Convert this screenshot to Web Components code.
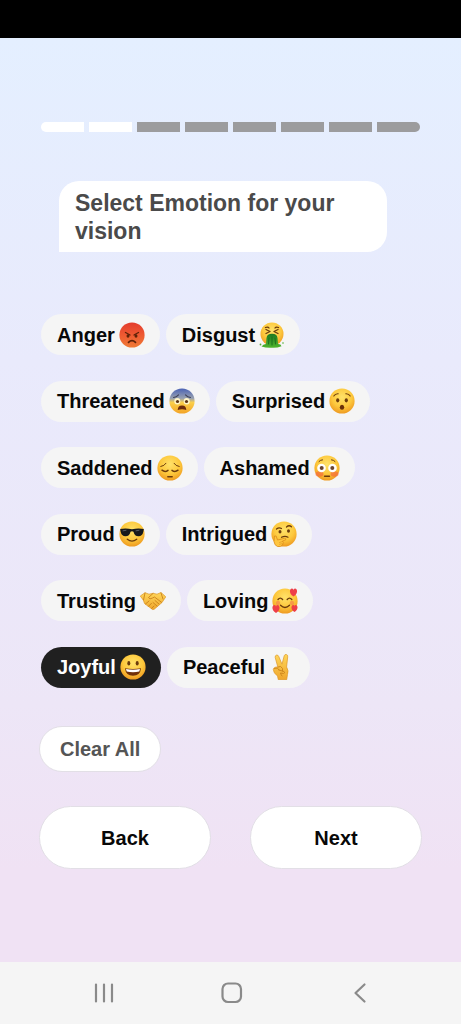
<!DOCTYPE html>
<html lang="en">
<head>
<meta charset="utf-8">
<meta name="viewport" content="width=device-width, initial-scale=1">
<title>Select Emotion</title>
<style>
  body { margin: 0; font-family: "Liberation Sans", Arial, Helvetica, sans-serif; }
</style>
</head>
<body>
<vision-app>
  <step-progress slot="progress" value="2" max="8"></step-progress>
  <speech-bubble slot="question">Select Emotion for your vision</speech-bubble>
  <emotion-chip icon="anger">Anger</emotion-chip>
  <emotion-chip icon="disgust">Disgust</emotion-chip>
  <emotion-chip icon="threatened">Threatened</emotion-chip>
  <emotion-chip icon="surprised">Surprised</emotion-chip>
  <emotion-chip icon="saddened">Saddened</emotion-chip>
  <emotion-chip icon="ashamed">Ashamed</emotion-chip>
  <emotion-chip icon="proud">Proud</emotion-chip>
  <emotion-chip icon="intrigued">Intrigued</emotion-chip>
  <emotion-chip icon="trusting">Trusting</emotion-chip>
  <emotion-chip icon="loving">Loving</emotion-chip>
  <emotion-chip icon="joyful" selected>Joyful</emotion-chip>
  <emotion-chip icon="peaceful">Peaceful</emotion-chip>
  <pill-button slot="clear" size="small">Clear All</pill-button>
  <pill-button slot="actions">Back</pill-button>
  <pill-button slot="actions">Next</pill-button>
</vision-app>

<script>
const defs = `<defs>
  <radialGradient id="y" cx=".5" cy=".35" r=".65"><stop offset="0" stop-color="#ffe26a"/><stop offset=".6" stop-color="#fdc83c"/><stop offset="1" stop-color="#ee9a20"/></radialGradient>
  <linearGradient id="r" x2="0" y2="1"><stop offset="0" stop-color="#e33b2c"/><stop offset=".5" stop-color="#ee5a32"/><stop offset="1" stop-color="#ef7a35"/></linearGradient>
  <linearGradient id="b" x2="0" y2="1"><stop offset="0" stop-color="#4a62b4"/><stop offset=".4" stop-color="#9aa2b0"/><stop offset=".56" stop-color="#fbcf4a"/><stop offset="1" stop-color="#f3a325"/></linearGradient>
  <linearGradient id="g" x2="0" y2="1"><stop offset="0" stop-color="#1d7a22"/><stop offset="1" stop-color="#4fb52c"/></linearGradient>
  <linearGradient id="h" x2="0" y2="1"><stop offset="0" stop-color="#ffd75a"/><stop offset="1" stop-color="#efa62c"/></linearGradient>
</defs>`;
const face = (fill = 'y') => `<circle cx="13" cy="13" r="12.6" fill="url(#${fill})"/>`;
const line = (d, w = 1.2, c = '#6b3b0c') => `<path d="${d}" fill="none" stroke="${c}" stroke-width="${w}" stroke-linecap="round" stroke-linejoin="round"/>`;
const heart = (x, y, s) => `<path transform="translate(${x} ${y}) scale(${s})" d="M0 4C-5 1-4-4-1.500-4Q0-4 0-2.300Q0-4 1.500-4C4-4 5 1 0 4z" fill="#ee3f48"/>`;

const icons = {
  anger: face('r') + line('M6.500 10.500L11 13M19.500 10.500L15 13', 1.4, '#5e2208') +
    `<ellipse cx="9" cy="14" rx="1.500" ry="1.800" fill="#5e2208"/><ellipse cx="17" cy="14" rx="1.500" ry="1.800" fill="#5e2208"/>` +
    line('M9.500 20.300Q13 17 16.500 20.300', 1.7, '#5e2208'),
  disgust: `<circle cx="13" cy="12" r="11.500" fill="url(#y)"/>` +
    line('M6.500 5.500Q9 4.500 10 6M19.500 5.500Q17 4.500 16 6M7 7.500L11 9.500L7 11.500M19 7.500L15 9.500L19 11.500', 1.3) +
    `<path d="M7.500 16Q8 11.800 13 11.800Q18 11.800 18.500 16L19 22Q22 22 22.500 24.200Q18 26 13 25.700Q7 26 2.500 24.500Q4 22 7 22z" fill="url(#g)"/>` +
    `<circle cx="1.500" cy="22.500" r=".9" fill="#4fae30"/><circle cx="24" cy="21" r=".8" fill="#4fae30"/>` +
    line('M10 16L9.500 22M13 15V23M16 16L16.500 22', .9, '#176b1d'),
  threatened: face('b') + line('M4.500 9.500Q7.500 9 9.500 6.800M21.500 9.500Q18.500 9 16.500 6.800', 1.1, '#3e4156') +
    `<ellipse cx="8.300" cy="13.300" rx="3" ry="3.200" fill="#fff5c8"/><ellipse cx="17.700" cy="13.300" rx="3" ry="3.200" fill="#fff5c8"/>` +
    `<circle cx="8.500" cy="13.500" r="1.600" fill="#5c3314"/><circle cx="17.500" cy="13.500" r="1.600" fill="#5c3314"/>` +
    `<path d="M8.700 22Q9 17.600 13 17.600Q17 17.600 17.300 22Q13 20.300 8.700 22z" fill="#6d2c0c"/>`,
  surprised: face() + line('M4.800 8Q6.300 5.500 9.200 5.700M21.200 8Q19.700 5.500 16.800 5.700', 1.1) +
    `<ellipse cx="8.700" cy="12.300" rx="1.600" ry="2.100" fill="#6b3b0c"/><ellipse cx="17.300" cy="12.300" rx="1.600" ry="2.100" fill="#6b3b0c"/><ellipse cx="13" cy="19.300" rx="2.200" ry="2.500" fill="#6b3008"/>`,
  saddened: face() + line('M3.800 11.500Q7.300 11 9 8.300M22.200 11.500Q18.700 11 17 8.300', 1) +
    line('M5 15.200Q8 17.600 11 15.400M21 15.200Q18 17.600 15 15.400', 1.5) + line('M10.800 21.800H15.200', 1.4),
  ashamed: face() + `<ellipse cx="5.500" cy="19" rx="4" ry="2.800" fill="#f4653a" opacity=".65"/><ellipse cx="20.500" cy="19" rx="4" ry="2.800" fill="#f4653a" opacity=".65"/>` +
    line('M5 6.500Q6.500 4.800 8.500 4.800M21 6.500Q19.500 4.800 17.500 4.800', 1) +
    `<circle cx="7.500" cy="13" r="4.300" fill="#fff"/><circle cx="18.500" cy="13" r="4.300" fill="#fff"/>` +
    `<circle cx="7.700" cy="13" r="2" fill="#6a4430"/><circle cx="18.300" cy="13" r="2" fill="#6a4430"/>` + line('M10.500 21.200H15.500', 1.4),
  proud: face() + `<path d="M1.200 8Q7 6.800 13 8.300Q19 6.800 24.800 8L24.400 10.500Q23.500 15.300 19.500 15.300Q15.500 15.300 14.500 10.800Q13 9.800 11.500 10.800Q10.500 15.300 6.500 15.300Q2.500 15.300 1.600 10.500z" fill="#17191c"/>` +
    line('M4 9.800L7 9.300M17 9.800L20 9.300', .7, '#747980') + line('M8.300 18.300Q13 22 17.700 18.300', 1.4),
  intrigued: face() + line('M5.500 8Q8 5.800 10.500 7.500M15.500 6Q18 3.600 20.500 5.800', 1.2) +
    `<ellipse cx="9" cy="10.800" rx="1.500" ry="1.800" fill="#6b3b0c"/><ellipse cx="17.500" cy="10" rx="1.500" ry="1.800" fill="#6b3b0c"/>` + line('M10.500 16.300Q14 14.500 17 16.200', 1.2) +
    `<path d="M3.500 15Q5.500 14 5.800 17L6.500 19L13.500 17.300Q15.300 17.300 14.800 18.800L11.500 20Q13 21 11.500 24Q9.500 26.300 6.500 25.500Q3.500 24.500 3 20.500z" fill="#ffc63f" stroke="#dc8d1d" stroke-width=".8"/>` + line('M8.500 21.500L11.500 20.500M8.500 23.300L11 22.700', .6, '#dc8d1d'),
  trusting: `<path d="M.3 8L5 4.700L9 6.200L13 5.300L17 6.200L21 4.500L25.800 8.800L22 14.500L14.500 21Q12.800 22.300 11.500 20.700L4.500 15.500L3.500 12.500z" fill="url(#h)" stroke="#dc9727" stroke-width=".7" stroke-linejoin="round"/>` +
    line('M13 5.500L8.500 9.500Q9.500 12 12.500 10L14.500 9L21.500 14.300M11.500 20.500L14 18M8.500 18.300L11.500 15.300M5.500 16L9 13M15 12.500L19 16M13 14.500L17 18M21 5L23 11M5 5L3.500 12', .9, '#c9811b'),
  loving: face() + line('M6 11.500Q8.300 8.800 10.600 11.500M15.200 11.500Q17.500 8.800 19.800 11.500M8.500 17.300Q13 21.500 17.500 17.300', 1.4) +
    `<circle cx="6" cy="15" r="2.200" fill="#f47a4c" opacity=".6"/><circle cx="20" cy="15" r="2.200" fill="#f47a4c" opacity=".6"/>` +
    heart(21.5, 4.5, 1) + heart(4, 21, 1) + heart(22.5, 20.5, .85),
  joyful: face() + `<ellipse cx="8.800" cy="9.300" rx="1.500" ry="2.200" fill="#6b3b0c"/><ellipse cx="17.200" cy="9.300" rx="1.500" ry="2.200" fill="#6b3b0c"/>` +
    `<path d="M5 14.200Q13 15.800 21 14.200Q20.300 21.700 13 21.700Q5.700 21.700 5 14.200z" fill="#713009"/><path d="M6 15Q13 16.500 20 15L19.300 17.500Q13 19 6.700 17.500z" fill="#fff"/>`,
  peaceful: `<path d="M8.800 13L6.200 3.500Q5.900 1.500 7.500 1.100Q9.200.800 9.800 2.600L13 10.200L15.200 1.800Q15.800.1 17.400.5Q19 1 18.700 2.900L17.600 13Q20 17 18.500 20.500L17.700 25.700H9.300L8.500 22Q4.500 19 4.300 15.500Q4.500 12.800 8.800 13z" fill="url(#h)" stroke="#dc9727" stroke-width=".7" stroke-linejoin="round"/>` +
    line('M5.500 14.500Q9 13 10 16M9 13Q12 11 13.500 14.500V17M10 16L15 17.500Q16.500 19 14.500 19.500L11.500 19Q12 21 13 22', .9, '#c9811b')
};

class StepProgress extends HTMLElement {
  connectedCallback() {
    const value = Number(this.getAttribute('value'));
    const max = Number(this.getAttribute('max'));
    this.setAttribute('role', 'progressbar');
    this.setAttribute('aria-label', 'Step');
    this.setAttribute('aria-valuenow', value);
    this.setAttribute('aria-valuemax', max);
    this.attachShadow({ mode: 'open' }).innerHTML = `<style>
      :host { display: flex; gap: 5px; height: 10px; border-radius: 5px; overflow: hidden; }
      span { flex: 1; background: #9c9c9e; }
      .done { background: #fff; }
    </style>` + Array.from({ length: max }, (_, i) => `<span class="${i < value ? 'done' : ''}"></span>`).join('');
  }
}

class SpeechBubble extends HTMLElement {
  constructor() {
    super();
    this.attachShadow({ mode: 'open' }).innerHTML = `<style>
      :host { display: block; background: #fff; border-radius: 20px 20px 20px 0; padding: 8px 16px 7px; color: #4a4a4a; }
      h1 { margin: 0; font-size: 23px; line-height: 28px; font-weight: 700; }
    </style><h1><slot></slot></h1>`;
  }
}

class EmotionChip extends HTMLElement {
  connectedCallback() {
    const root = this.attachShadow({ mode: 'open' });
    root.innerHTML = `<style>
      :host { display: block; }
      button { display: flex; align-items: center; gap: 4px; height: 41px; margin: 0; padding: 0 15px 0 16px; border: 0;
        border-radius: 21px; background: #f5f5f5; color: #080808; font: 700 20px/26px "Liberation Sans", Arial, sans-serif; cursor: pointer; }
      button[aria-pressed="true"] { background: #202020; color: #fff; }
      svg { display: block; width: 26px; height: 26px; flex: none; }
    </style>
    <button type="button" aria-pressed="${this.hasAttribute('selected')}"><slot></slot><svg viewBox="0 0 26 26" aria-hidden="true">${defs}${icons[this.getAttribute('icon')]}</svg></button>`;
    const button = root.querySelector('button');
    button.addEventListener('click', () => this.select(button.getAttribute('aria-pressed') !== 'true'));
  }
  select(on) { this.shadowRoot.querySelector('button').setAttribute('aria-pressed', on); }
}

class PillButton extends HTMLElement {
  constructor() {
    super();
    this.attachShadow({ mode: 'open' }).innerHTML = `<style>
      :host { display: block; flex: 1; }
      button { box-sizing: border-box; width: 100%; height: 63px; margin: 0; padding: 0 20px; border: 1px solid #e2dfe6;
        border-radius: 32px; background: #fff; color: #080808; font: 700 20px/26px "Liberation Sans", Arial, sans-serif; cursor: pointer; }
      :host([size="small"]) { flex: none; }
      :host([size="small"]) button { height: 46px; color: #555; }
    </style><button type="button"><slot></slot></button>`;
  }
}

class SystemNav extends HTMLElement {
  constructor() {
    super();
    this.attachShadow({ mode: 'open' }).innerHTML = `<style>
      :host { display: block; background: #f5f5f5; }
      nav { display: flex; justify-content: center; height: 62px; padding-left: 3px; }
      button { flex: 0 0 28%; display: flex; align-items: center; justify-content: center; margin: 0; padding: 0; border: 0; background: none; }
      svg { width: 24px; height: 24px; fill: none; stroke: #8a8a8a; stroke-width: 2.2; stroke-linecap: round; stroke-linejoin: round; }
    </style>
    <nav aria-label="System">
      <button type="button" aria-label="Recent apps"><svg viewBox="0 0 24 24"><path d="M4 3.500v17M12 3.500v17M20 3.500v17"/></svg></button>
      <button type="button" aria-label="Home"><svg viewBox="0 0 24 24"><rect x="2.500" y="2.500" width="18.500" height="18.500" rx="5.500"/></svg></button>
      <button type="button" aria-label="Back"><svg viewBox="0 0 24 24"><path d="M16.500 3.500L7.500 12l9 8.500"/></svg></button>
    </nav>`;
  }
}

class VisionApp extends HTMLElement {
  constructor() {
    super();
    this.attachShadow({ mode: 'open' }).innerHTML = `<style>
      :host { display: flex; flex-direction: column; min-height: 100vh; }
      header { height: 38px; background: #000; }
      main { flex: 1; padding: 84px 39px 40px; background: linear-gradient(#e4efff, #e9eafc 35%, #ede6f7 72%, #f0e2f4 90%, #f0e2f4); }
      .progress { padding: 0 2px; }
      .question { margin: 49px 35px 0 20px; }
      .chips { display: flex; flex-wrap: wrap; column-gap: 6px; align-content: space-between; min-height: 374px; margin-top: 62px; padding: 0 2px; }
      .clear { display: flex; margin-top: 38px; }
      .actions { display: flex; gap: 39px; margin-top: 34px; }
    </style>
    <header></header>
    <main>
      <div class="progress"><slot name="progress"></slot></div>
      <div class="question"><slot name="question"></slot></div>
      <div class="chips" role="group" aria-label="Emotions"><slot></slot></div>
      <div class="clear"><slot name="clear"></slot></div>
      <div class="actions"><slot name="actions"></slot></div>
    </main>
    <system-nav></system-nav>`;
    this.shadowRoot.querySelector('.clear').addEventListener('click', () =>
      this.querySelectorAll('emotion-chip').forEach(chip => chip.select(false)));
  }
}

customElements.define('step-progress', StepProgress);
customElements.define('speech-bubble', SpeechBubble);
customElements.define('emotion-chip', EmotionChip);
customElements.define('pill-button', PillButton);
customElements.define('system-nav', SystemNav);
customElements.define('vision-app', VisionApp);
</script>
</body>
</html>
